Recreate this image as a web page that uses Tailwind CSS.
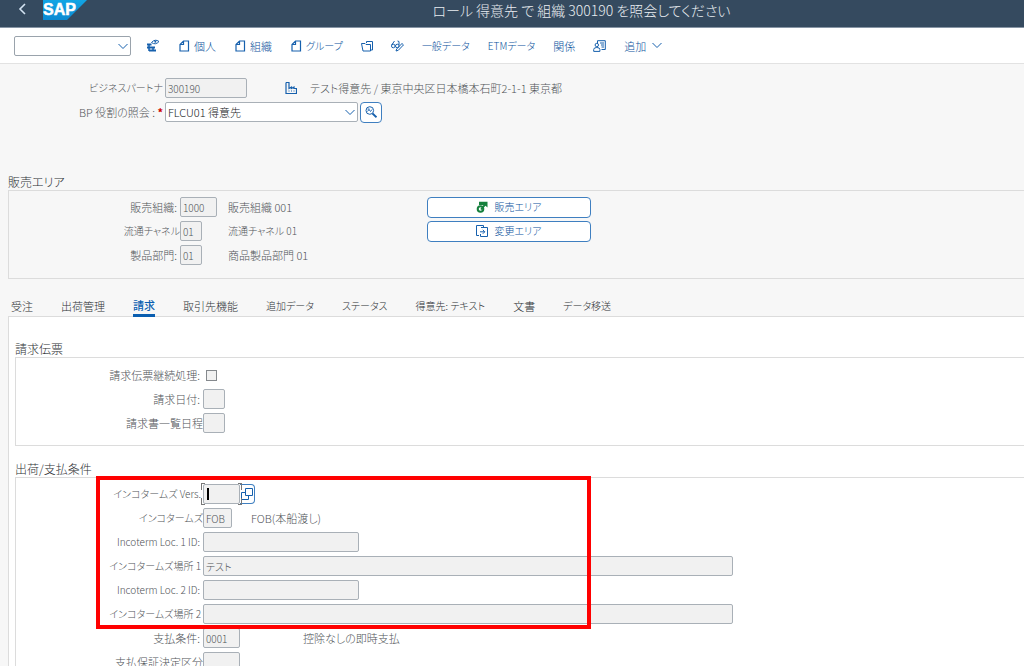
<!DOCTYPE html>
<html lang="ja">
<head>
<meta charset="utf-8">
<meta name="viewport" content="width=device-width, initial-scale=1">
<title>ロール 得意先 で 組織 300190 を照会してください</title>
<script src="https://cdn.jsdelivr.net/npm/@tailwindcss/browser@4"></script>
</head>
<body class="h-screen overflow-hidden bg-[#f7f7f7] font-['Noto_Sans_CJK_JP','Liberation_Sans',sans-serif] text-[11px] leading-4 font-light text-[#505458] [font-feature-settings:'palt']">

<header class="flex h-7 items-start border-b border-[#8795a5] bg-[#354a5f] text-white">
  <button type="button" aria-label="戻る" class="ml-[18px] mt-[3px]">
    <svg class="h-3 w-2" viewBox="0 0 8 12" fill="none" stroke="#d3e3f2" stroke-width="1.6"><path d="M7 1 2 6l5 5"/></svg>
  </button>
  <svg class="ml-[17px] h-5 w-11" viewBox="0 0 44 20" role="img" aria-label="SAP">
    <defs><linearGradient id="sap" x1="0" y1="0" x2="0" y2="1"><stop offset="0" stop-color="#12a5e4"/><stop offset="1" stop-color="#0a8ad2"/></linearGradient></defs>
    <path d="M0 0h44L24 20H0z" fill="url(#sap)"/>
    <text x="0" y="15" font-family="Liberation Sans, sans-serif" font-size="16" font-weight="700" fill="#fff" stroke="#fff" stroke-width=".5">SAP</text>
  </svg>
  <h1 class="mr-[86px] flex-1 pl-[138px] text-center text-[14px] leading-5 font-light text-[#e9edf1]">ロール 得意先 で 組織 300190 を照会してください</h1>
</header>

<nav class="flex h-9 items-center gap-[18px] border-b border-[#e2e2e2] bg-white pl-3.5 whitespace-nowrap text-[#0a529c]" aria-label="ツールバー">
  <div class="flex items-center gap-[19px]">
    <div class="relative -mr-1 h-5 w-[117px]">
      <select aria-label="コマンド" class="h-5 w-full appearance-none rounded-xs border border-[#9aa3ac] bg-white"><option></option></select>
      <svg class="pointer-events-none absolute right-[3px] top-[7px] h-[7px] w-2.5" viewBox="0 0 10 7" fill="none" stroke="#1660ad"><path d="M.5 1 5 5.500 9.500 1"/></svg>
    </div>
    <button type="button" aria-label="表示切替"><svg class="h-3.5 w-3.5" viewBox="0 0 14 14" fill="none" stroke="#1660ad"><path d="M1 5.500h4.500M1 8.500h8M3 11.500h7" stroke-width="2"/><path d="M3 5v7M7 8v4" stroke-width="1.500"/><path d="M5.500 3.500q3.500-4 7.500-1-3.500 4-7.500 1z"/><circle cx="9.300" cy="2.800" r="1" fill="#1660ad" stroke="none"/></svg></button>
    <button type="button" class="flex items-center gap-1"><svg class="h-3 w-[11px]" viewBox="0 0 11 12" fill="none" stroke="#1660ad" stroke-width="1.200"><path d="M4.500 1h5v10H1V4.500zM4.500 1v3.500H1"/></svg>個人</button>
    <button type="button" class="flex items-center gap-1"><svg class="h-3 w-[11px]" viewBox="0 0 11 12" fill="none" stroke="#1660ad" stroke-width="1.200"><path d="M4.500 1h5v10H1V4.500zM4.500 1v3.500H1"/></svg>組織</button>
    <button type="button" class="flex items-center gap-1 text-[10px]"><svg class="h-3 w-[11px]" viewBox="0 0 11 12" fill="none" stroke="#1660ad" stroke-width="1.200"><path d="M4.500 1h5v10H1V4.500zM4.500 1v3.500H1"/></svg>グループ</button>
  </div>
  <button type="button" aria-label="開く"><svg class="h-3 w-3" viewBox="0 0 12 12" fill="none" stroke="#1660ad"><path d="M5.500 3V1.500h6v8.500H9.500M.5 3.500h3.500l1 1h4.500v6.500H2z"/></svg></button>
  <button type="button" aria-label="照会/変更"><svg class="h-3 w-[13px]" viewBox="0 0 13 12" fill="none" stroke="#1660ad"><circle cx="2.300" cy="6" r="1.800"/><circle cx="6.300" cy="6" r="1.800"/><path d="M.6 5 3.500 1M8 5 8 1.500 6.500 1M5 11l.8-2.300L11 3.500l1.500 1.400-5.200 5.400z"/></svg></button>
  <button type="button" class="text-[10px]">一般データ</button>
  <button type="button" class="text-[10px]">ETMデータ</button>
  <button type="button">関係</button>
  <button type="button" aria-label="担当者"><svg class="h-3 w-[13px]" viewBox="0 0 13 12" fill="none" stroke="#1660ad"><path d="M4.500 3V.7h7.800v8.800H8.500M7 3h4M8 5h3M8.500 7H11"/><circle cx="3.800" cy="5" r="1.700"/><path d="M.7 11.400V9.500q0-2 3.100-2t3.100 2v1.900z"/></svg></button>
  <button type="button" class="flex items-center gap-1.5">追加<svg class="h-[7px] w-2.5" viewBox="0 0 10 7" fill="none" stroke="#1660ad"><path d="M.5 1 5 5.500 9.500 1"/></svg></button>
</nav>

<main class="pt-3">
  <div class="flex h-6 items-center">
    <label for="bp" class="w-[165px] pr-0.5 text-right text-[10px] whitespace-nowrap">ビジネスパートナ</label>
    <div class="flex w-[120px]"><input id="bp" readonly value="300190" class="h-5 w-[82px] rounded-xs border border-[#a9b0b7] bg-[#f1f1f1] px-0.5 text-[10px]"></div>
    <svg class="h-3 w-3" viewBox="0 0 12 12" fill="none" stroke="#1660ad"><path d="M1 .5v11h10.500V6.500H9V5L6.500 6.500V5L4 6.500V.5H1M3.500 9h1M6 9h1M8.500 9h1" stroke-width="1.200"/></svg>
    <span class="ml-[13px]">テスト得意先 / 東京中央区日本橋本石町2-1-1 東京都</span>
  </div>
  <div class="flex h-6 items-center">
    <label for="role" class="w-[165px] pr-0.5 text-right whitespace-nowrap">BP 役割の照会 : <span class="font-bold text-[#c00]">*</span></label>
    <div class="relative h-5 w-[193px]">
      <select id="role" class="h-5 w-full appearance-none rounded-xs border border-[#a9b0b7] bg-white px-0.5 text-[#15181b]"><option>FLCU01 得意先</option></select>
      <svg class="pointer-events-none absolute right-[3px] top-[7px] h-[7px] w-2.5" viewBox="0 0 10 7" fill="none" stroke="#1660ad"><path d="M.5 1 5 5.500 9.500 1"/></svg>
    </div>
    <button type="button" aria-label="詳細" class="ml-0.5 flex h-[21px] w-[22px] items-center justify-center rounded-[4px] border border-[#3f7fc0] bg-white"><svg class="h-3 w-3" viewBox="0 0 12 12" fill="none" stroke="#1660ad"><circle cx="4.800" cy="4.500" r="3.800"/><path d="m7.500 7.500 4 3.800" stroke-width="1.800"/><path d="m2.500 5.500 1.500-2 1.500 2 1.500-2M2.500 3h2" stroke-width=".9"/></svg></button>
  </div>

  <section class="mt-[50px] ml-2">
    <h2 class="text-[12px] leading-4 font-light text-[#2e3236]">販売エリア</h2>
    <div class="border-y border-l border-[#dcdcdc] pt-1 pb-[11px]">
      <div class="flex h-6 items-center">
        <label for="org" class="w-[171px] pr-[3px] text-right whitespace-nowrap">販売組織:</label>
        <div class="flex w-12"><input id="org" readonly value="1000" class="h-5 w-[37px] rounded-xs border border-[#a9b0b7] bg-[#f1f1f1] px-0.5 text-[10px]"></div>
        <span class="w-[199px]">販売組織 001</span>
        <button type="button" class="flex h-[21px] w-[164px] items-center justify-center gap-1.5 rounded-[4px] border border-[#3f7fc0] bg-white text-[10px] text-[#0a529c]"><svg class="h-3 w-3" viewBox="0 0 12 12" fill="none" stroke="#15803d"><circle cx="4.500" cy="8" r="2.800" stroke-width="2"/><path d="M3 .8h8.500v5.700L9.500 4.800 5.500 9 4.300 8l3.200-4H3z" fill="#15803d" stroke="none"/></svg>販売エリア</button>
      </div>
      <div class="flex h-6 items-center">
        <label for="channel" class="w-[171px] text-right text-[10px] whitespace-nowrap">流通チャネル</label>
        <div class="flex w-12"><input id="channel" readonly value="01" class="h-5 w-[22px] rounded-xs border border-[#a9b0b7] bg-[#f1f1f1] px-0.5 text-[10px]"></div>
        <span class="w-[199px] text-[10px]">流通チャネル 01</span>
        <button type="button" class="flex h-[21px] w-[164px] items-center justify-center gap-1.5 rounded-[4px] border border-[#3f7fc0] bg-white text-[10px] text-[#0a529c]"><svg class="h-3 w-3" viewBox="0 0 12 12" fill="none" stroke="#1660ad"><path d="M3 10.500H.5V.5h7v2M5 2.500h6.500v9H4.500V9M4 6.800h4.500M6.800 4.800l2 2-2 2"/></svg>変更エリア</button>
      </div>
      <div class="flex h-6 items-center">
        <label for="division" class="w-[171px] pr-[3px] text-right whitespace-nowrap">製品部門:</label>
        <div class="flex w-12"><input id="division" readonly value="01" class="h-5 w-[22px] rounded-xs border border-[#a9b0b7] bg-[#f1f1f1] px-0.5 text-[10px]"></div>
        <span>商品製品部門 01</span>
      </div>
    </div>
  </section>

  <div role="tablist" class="mt-[15px] flex h-[22px] gap-7 pl-[11px] whitespace-nowrap text-[#2e3236]">
    <button type="button" role="tab" class="h-[23px]">受注</button>
    <button type="button" role="tab" class="h-[23px]">出荷管理</button>
    <button type="button" role="tab" aria-selected="true" class="relative h-[23px] border-b-[3px] border-[#0a5eb0] pt-0.5 font-medium text-[#0a5eb0]">請求</button>
    <button type="button" role="tab" class="h-[23px]">取引先機能</button>
    <button type="button" role="tab" class="h-[23px] text-[10px]">追加データ</button>
    <button type="button" role="tab" class="h-[23px] text-[10px]">ステータス</button>
    <button type="button" role="tab" class="h-[23px] text-[10px]">得意先: テキスト</button>
    <button type="button" role="tab" class="h-[23px]">文書</button>
    <button type="button" role="tab" class="h-[23px] text-[10px]">データ移送</button>
  </div>

  <div role="tabpanel" class="ml-2 border-t border-l border-[#dcdcdc] bg-white pt-6 pl-1.5">
    <section>
      <h2 class="text-[12px] leading-4 font-light text-[#2e3236]">請求伝票</h2>
      <div class="border-y border-l border-[#dcdcdc] pt-[5px] pb-2.5">
        <div class="flex h-6 items-center">
          <label for="follow" class="w-[187px] pr-[3px] text-right whitespace-nowrap">請求伝票継続処理:</label>
          <input id="follow" type="checkbox" class="ml-[3px] h-[11px] w-[11px] appearance-none border border-[#85898d] bg-[#f1f1f1]">
        </div>
        <div class="flex h-6 items-center">
          <label for="billdate" class="w-[187px] pr-[3px] text-right whitespace-nowrap">請求日付:</label>
          <input id="billdate" readonly class="h-5 w-[22px] rounded-xs border border-[#a9b0b7] bg-[#f1f1f1] px-0.5">
        </div>
        <div class="flex h-6 items-center">
          <label for="listdate" class="w-[187px] text-right whitespace-nowrap">請求書一覧日程</label>
          <input id="listdate" readonly class="h-5 w-[22px] rounded-xs border border-[#a9b0b7] bg-[#f1f1f1] px-0.5">
        </div>
      </div>
    </section>

    <section class="mt-[15px]">
      <h2 class="text-[12px] leading-4 font-light text-[#2e3236]">出荷/支払条件</h2>
      <div class="relative border-t border-l border-[#dcdcdc] pt-1">
        <div class="flex h-6 items-center">
          <label for="vers" class="w-[187px] pr-0.5 text-right text-[10px] whitespace-nowrap">インコタームズ Vers.</label>
          <div class="relative h-5 w-[37px]">
            <input id="vers" readonly class="h-5 w-full rounded-xs border border-[#a9b0b7] bg-[#f1f1f1] px-0.5">
            <i class="absolute left-1 top-1 h-3 w-0.5 bg-black"></i>
            <i class="absolute -left-0.5 -top-px h-[7px] w-1 border-t border-l border-[#777]"></i>
            <i class="absolute -right-0.5 -top-px h-[7px] w-1 border-t border-r border-[#777]"></i>
            <i class="absolute -left-0.5 -bottom-px h-[7px] w-1 border-b border-l border-[#777]"></i>
            <i class="absolute -right-0.5 -bottom-px h-[7px] w-1 border-r border-b border-[#777]"></i>
          </div>
          <button type="button" aria-label="入力ヘルプ" class="flex h-5 w-[15px] items-center justify-center rounded-r-[4px] border border-l-0 border-[#3f7fc0] bg-white"><svg class="h-3 w-3" viewBox="0 0 12 12" fill="none" stroke="#1660ad"><path d="M4.500.5h7v7h-7zM4.500 4.500h-4v7h7v-4"/></svg></button>
        </div>
        <div class="flex h-6 items-center">
          <label for="inco" class="w-[187px] text-right text-[10px] whitespace-nowrap">インコタームズ</label>
          <div class="flex w-12"><input id="inco" readonly value="FOB" class="h-5 w-[29px] rounded-xs border border-[#a9b0b7] bg-[#f1f1f1] px-0.5 text-[10px]"></div>
          <span>FOB(本船渡し)</span>
        </div>
        <div class="flex h-6 items-center">
          <label for="loc1id" class="w-[187px] pr-[3px] text-right text-[10px] whitespace-nowrap">Incoterm Loc. 1 ID:</label>
          <input id="loc1id" readonly class="h-5 w-[156px] rounded-xs border border-[#a9b0b7] bg-[#f1f1f1] px-0.5">
        </div>
        <div class="flex h-6 items-center">
          <label for="loc1" class="w-[187px] pr-0.5 text-right text-[10px] whitespace-nowrap">インコタームズ場所 1</label>
          <input id="loc1" readonly value="テスト" class="h-5 w-[530px] rounded-xs border border-[#a9b0b7] bg-[#f1f1f1] px-0.5 text-[10px]">
        </div>
        <div class="flex h-6 items-center">
          <label for="loc2id" class="w-[187px] pr-[3px] text-right text-[10px] whitespace-nowrap">Incoterm Loc. 2 ID:</label>
          <input id="loc2id" readonly class="h-5 w-[156px] rounded-xs border border-[#a9b0b7] bg-[#f1f1f1] px-0.5">
        </div>
        <div class="flex h-6 items-center">
          <label for="loc2" class="w-[187px] pr-0.5 text-right text-[10px] whitespace-nowrap">インコタームズ場所 2</label>
          <input id="loc2" readonly class="h-5 w-[530px] rounded-xs border border-[#a9b0b7] bg-[#f1f1f1] px-0.5">
        </div>
        <div class="flex h-6 items-center">
          <label for="terms" class="w-[187px] pr-[3px] text-right whitespace-nowrap">支払条件:</label>
          <div class="flex w-[100px]"><input id="terms" readonly value="0001" class="h-5 w-[37px] rounded-xs border border-[#a9b0b7] bg-[#f1f1f1] px-0.5 text-[10px]"></div>
          <span>控除なしの即時支払</span>
        </div>
        <div class="flex h-6 items-center">
          <label for="guarantee" class="w-[187px] text-right whitespace-nowrap">支払保証決定区分</label>
          <input id="guarantee" readonly class="h-5 w-[37px] rounded-xs border border-[#a9b0b7] bg-[#f1f1f1] px-0.5">
        </div>
        <div class="pointer-events-none absolute -top-0.5 left-20 h-[153px] w-[495px] border-4 border-[#f00]"></div>
      </div>
    </section>
  </div>
</main>
</body>
</html>
